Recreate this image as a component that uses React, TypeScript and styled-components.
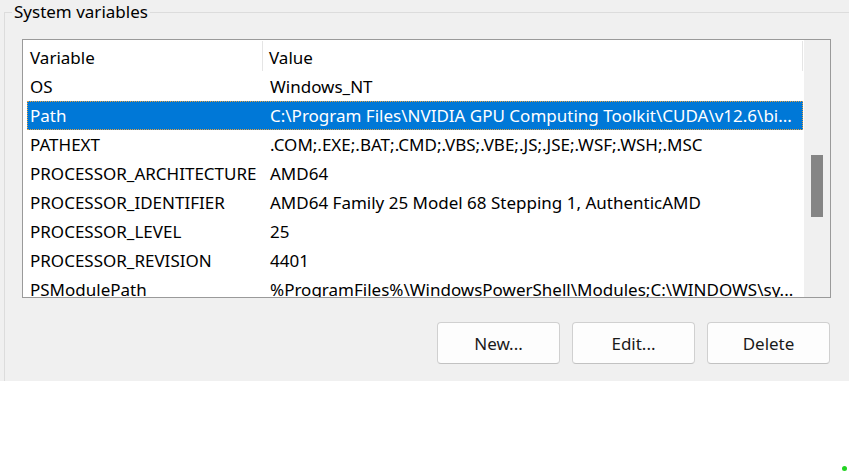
import React from "react";
import styled, { createGlobalStyle } from "styled-components";

const Global = createGlobalStyle`
  html, body { margin: 0; padding: 0; background: #ffffff; }
  body { font-family: "Noto Sans", "Open Sans", sans-serif; font-size: 17px; color: #000; }
  * { box-sizing: border-box; }
`;

const Page = styled.div`
  width: 849px;
  height: 473px;
  overflow: hidden;
  display: flex;
  flex-direction: column;
`;

const Panel = styled.div`
  height: 381px;
  background: #f0f0f0;
  overflow: hidden;
  padding: 2px 0 0 4px;
`;

const GroupBox = styled.fieldset`
  margin: 0 -20px 0 0;
  border: 1px solid #dcdcdc;
  padding: 17px 0 0 17px;
  height: 420px;
`;

const Legend = styled.legend`
  margin-left: -10px;
  padding: 0 2px;
  font-size: 17px;
  line-height: 20px;
  color: #000;
`;

const Content = styled.div`
  width: 809px;
  display: flex;
  flex-direction: column;
`;

const ListView = styled.div`
  height: 259px;
  border: 1px solid #9a9a9a;
  background: #fff;
  display: flex;
  overflow: hidden;
`;

const ListBody = styled.div`
  flex: 1;
  min-width: 0;
  display: flex;
  flex-direction: column;
  overflow: hidden;
`;

const Header = styled.div`
  height: 32px;
  flex: none;
  display: grid;
  grid-template-columns: 240px 539px 1px;
`;

const HeaderCell = styled.div<{ $pad: number; $last?: boolean }>`
  display: flex;
  align-items: center;
  padding: 3px 0 0 ${(p) => p.$pad}px;
  border-right: ${(p) => (p.$last ? "none" : "1px solid #e5e5e5")};
  margin: 1px 0;
  white-space: nowrap;
`;

const HeaderEnd = styled.div`
  background: #e5e5e5;
  margin: 1px 0;
`;

const Row = styled.div<{ $selected?: boolean }>`
  height: 29px;
  flex: none;
  margin-left: 4px;
  width: 776px;
  display: grid;
  grid-template-columns: 237px 1fr;
  align-items: center;
  background: ${(p) => (p.$selected ? "#0078d7" : "transparent")};
  color: ${(p) => (p.$selected ? "#ffffff" : "#000000")};
  outline: ${(p) => (p.$selected ? "1px dotted #e8a040" : "none")};
  outline-offset: -1px;
`;

const Cell = styled.div<{ $pad: number }>`
  padding-left: ${(p) => p.$pad}px;
  white-space: nowrap;
  overflow: hidden;
`;

const ScrollBar = styled.div`
  width: 26px;
  flex: none;
  background: #f0f0f0;
  padding: 115px 7px 0 7px;
`;

const Thumb = styled.div`
  width: 12px;
  height: 62px;
  background: #858585;
`;

const ButtonRow = styled.div`
  margin-top: 24px;
  display: flex;
  justify-content: flex-end;
  gap: 12px;
  padding-right: 1px;
`;

const Button = styled.button`
  width: 123px;
  height: 42px;
  background: #fdfdfd;
  border: 1px solid #d0d0d0;
  border-bottom-color: #c2c2c2;
  border-radius: 4px;
  font-family: inherit;
  font-size: 17px;
  color: #1a1a1a;
  padding: 0;
`;

const Footer = styled.div`
  flex: 1;
  display: flex;
  justify-content: flex-end;
  align-items: flex-end;
  padding: 0 2px 2px 0;
`;

const Dot = styled.div`
  width: 5px;
  height: 5px;
  border-radius: 50%;
  background: #22d322;
`;

const rows: [string, string][] = [
  ["OS", "Windows_NT"],
  ["Path", "C:\\Program Files\\NVIDIA GPU Computing Toolkit\\CUDA\\v12.6\\bi..."],
  ["PATHEXT", ".COM;.EXE;.BAT;.CMD;.VBS;.VBE;.JS;.JSE;.WSF;.WSH;.MSC"],
  ["PROCESSOR_ARCHITECTURE", "AMD64"],
  ["PROCESSOR_IDENTIFIER", "AMD64 Family 25 Model 68 Stepping 1, AuthenticAMD"],
  ["PROCESSOR_LEVEL", "25"],
  ["PROCESSOR_REVISION", "4401"],
  ["PSModulePath", "%ProgramFiles%\\WindowsPowerShell\\Modules;C:\\WINDOWS\\sy..."],
];

export default function App() {
  return (
    <Page>
      <Global />
      <Panel>
        <GroupBox>
          <Legend>System variables</Legend>
          <Content>
            <ListView>
              <ListBody>
                <Header>
                  <HeaderCell $pad={7}>Variable</HeaderCell>
                  <HeaderCell $pad={6} $last>Value</HeaderCell>
                  <HeaderEnd />
                </Header>
                {rows.map(([k, v]) => (
                  <Row key={k} $selected={k === "Path"}>
                    <Cell $pad={3}>{k}</Cell>
                    <Cell $pad={6}>{v}</Cell>
                  </Row>
                ))}
              </ListBody>
              <ScrollBar>
                <Thumb />
              </ScrollBar>
            </ListView>
            <ButtonRow>
              <Button>New...</Button>
              <Button>Edit...</Button>
              <Button>Delete</Button>
            </ButtonRow>
          </Content>
        </GroupBox>
      </Panel>
      <Footer>
        <Dot />
      </Footer>
    </Page>
  );
}
